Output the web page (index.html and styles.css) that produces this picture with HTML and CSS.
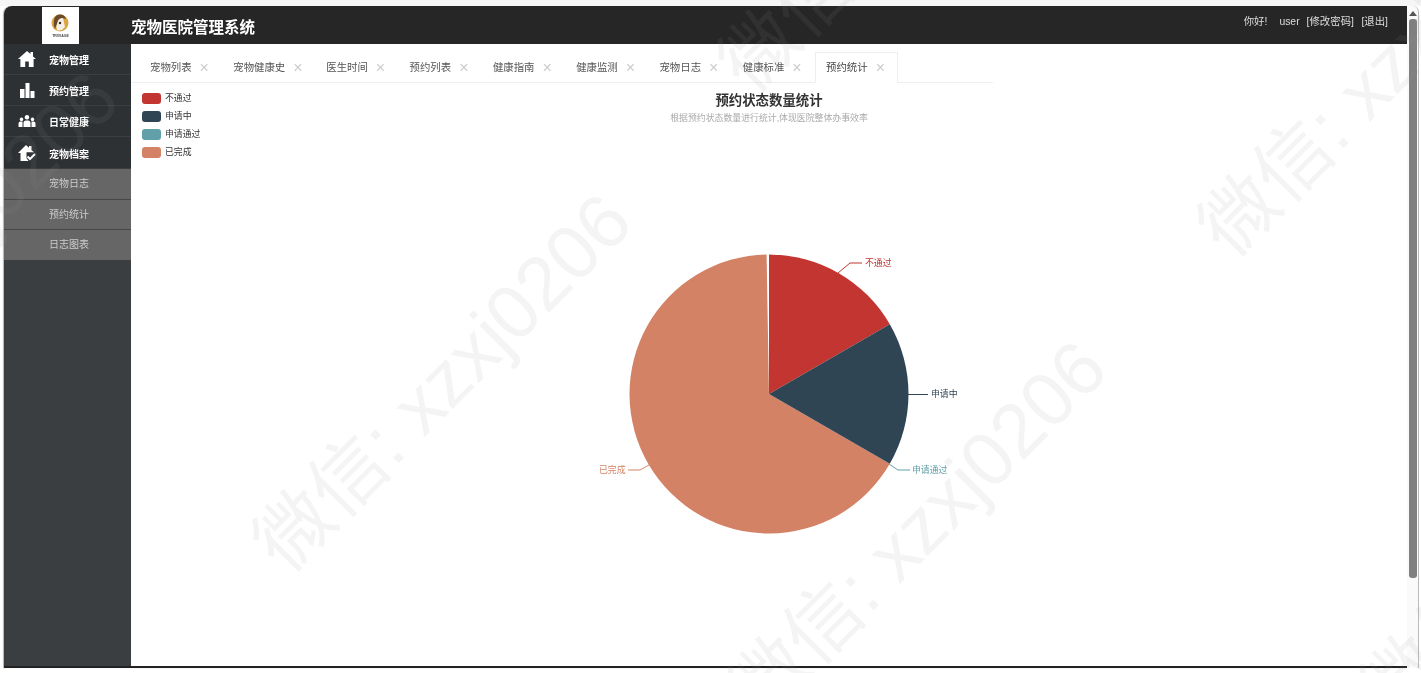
FILE: index.html
```html
<!DOCTYPE html>
<html lang="zh-CN">
<head>
    <meta charset="UTF-8">
    <title>宠物医院管理系统</title>
    <link rel="stylesheet" href="styles.css">
</head>
<body>

    <div class="page">
        <div class="window">
            <!-- Top bar -->
            <header class="topbar">
                <div class="logo">
                    <svg width="37" height="37" viewBox="0 0 37 37">
                        <circle cx="18" cy="16" r="8.500" fill="#d9a441"/>
                        <path d="M13 12 Q17 8 21 11 L23 20 Q19 25 15 23 Z" fill="#f3efe6"/>
                        <path d="M12 13 Q13 7 19 7.500 Q23 8 24 12 L20 11 Q16 11 15 17 L13 22 Q11 18 12 13 Z" fill="#6b4a2a"/>
                        <circle cx="18" cy="16" r="1.200" fill="#3a2a1c"/>
                        <text class="logo-text" x="18.500" y="30" text-anchor="middle">TRIVIAGE</text>
                    </svg>
                </div>
                <h1 class="app-title">宠物医院管理系统</h1>
                <div class="user-info">
                    <span class="hello">你好!</span>
                    <span class="user-name">user</span>
                    <a class="user-link">[修改密码]</a>
                    <a class="user-link">[退出]</a>
                </div>
            </header>

            <div class="main">
                <!-- Side menu -->
                <nav class="sidebar">
                    <div class="menu-item">
                        <svg class="menu-icon" viewBox="0 0 18 16"><path d="M9 0 L12.500 3.100 V1 H15 V5.400 L18 8 H15.600 V16 H10.800 V10.500 H7.200 V16 H2.400 V8 H0 Z"/></svg>
                        <span>宠物管理</span>
                    </div>
                    <div class="menu-item">
                        <svg class="menu-icon" viewBox="0 0 18 16"><path d="M2 7 H6.500 V16 H2 Z M7.500 1 H11.500 V16 H7.500 Z M12.500 9 H16.500 V16 H12.500 Z"/></svg>
                        <span>预约管理</span>
                    </div>
                    <div class="menu-item">
                        <svg class="menu-icon" viewBox="0 0 18 16"><path d="M9 2 a2.300 2.300 0 1 1 -.01 0 Z M5.500 14 V10 Q5.500 7.500 8 7.500 H10 Q12.500 7.500 12.500 10 V14 Z M3.500 4.500 a1.800 1.800 0 1 1 -.01 0 Z M0.500 13 V10.500 Q0.500 8.500 2.500 8.500 H4.500 V14 H0.500 Z M14.500 4.500 a1.800 1.800 0 1 1 -.01 0 Z M13.500 8.500 H15.500 Q17.500 8.500 17.500 10.500 V14 H13.500 Z"/></svg>
                        <span>日常健康</span>
                    </div>
                    <div class="menu-item">
                        <svg class="menu-icon" viewBox="0 0 18 16"><path d="M8 0 L11 2.700 V1 H13.500 V5 L16 7.300 H8.500 V13 L10.500 16 H2.500 V8 H0 Z"/><path d="M9.500 11.500 L12 14 L17 9" fill="none" stroke="#fff" stroke-width="2"/></svg>
                        <span>宠物档案</span>
                    </div>
                    <div class="submenu">
                        <div class="submenu-item">宠物日志</div>
                        <div class="submenu-item">预约统计</div>
                        <div class="submenu-item">日志图表</div>
                    </div>
                </nav>

                <div class="content">
                    <!-- Tabs -->
                    <ul class="tabs">
                        <li class="tab">宠物列表<i class="tab-close">×</i></li>
                        <li class="tab">宠物健康史<i class="tab-close">×</i></li>
                        <li class="tab">医生时间<i class="tab-close">×</i></li>
                        <li class="tab">预约列表<i class="tab-close">×</i></li>
                        <li class="tab">健康指南<i class="tab-close">×</i></li>
                        <li class="tab">健康监测<i class="tab-close">×</i></li>
                        <li class="tab">宠物日志<i class="tab-close">×</i></li>
                        <li class="tab">健康标准<i class="tab-close">×</i></li>
                        <li class="tab active">预约统计<i class="tab-close">×</i></li>
                    </ul>

                    <!-- Pie chart, viewBox uses page coordinates -->
                    <svg class="chart" viewBox="131 83 1276 583">
                        <text class="chart-title" x="769" y="104.500" text-anchor="middle">预约状态数量统计</text>
                        <text class="chart-sub" x="769" y="121" text-anchor="middle">根据预约状态数量进行统计,体现医院整体办事效率</text>

                        <rect x="142" y="93" width="19" height="11" rx="3" fill="#c23531"/>
                        <text class="legend-text" x="165" y="100.500">不通过</text>
                        <rect x="142" y="111" width="19" height="11" rx="3" fill="#2f4554"/>
                        <text class="legend-text" x="165" y="118.500">申请中</text>
                        <rect x="142" y="129" width="19" height="11" rx="3" fill="#61a0a8"/>
                        <text class="legend-text" x="165" y="136.500">申请通过</text>
                        <rect x="142" y="147" width="19" height="11" rx="3" fill="#d48265"/>
                        <text class="legend-text" x="165" y="154.500">已完成</text>

                        <path d="M769 394 L889.800 463.750 A139.500 139.500 0 1 1 766.600 254.500 Z" fill="#d48265"/>
                        <path d="M769 394 V254.500 A139.500 139.500 0 0 1 889.800 324.250 Z" fill="#c23531"/>
                        <path d="M769 394 L889.800 324.250 A139.500 139.500 0 0 1 889.800 463.750 Z" fill="#2f4554"/>

                        <polyline class="label-line" points="838,273 850,263 862,263" stroke="#c23531"/>
                        <text class="pie-label" x="865" y="265.500" fill="#c23531">不通过</text>
                        <polyline class="label-line" points="908,394.500 928,394.500" stroke="#2f4554"/>
                        <text class="pie-label" x="931" y="396.500" fill="#2f4554">申请中</text>
                        <polyline class="label-line" points="889,464 898,470 910,470" stroke="#61a0a8"/>
                        <text class="pie-label" x="912" y="472.500" fill="#61a0a8">申请通过</text>
                        <polyline class="label-line" points="628,470 640,470 649,465" stroke="#d48265"/>
                        <text class="pie-label" x="599" y="472.500" fill="#d48265">已完成</text>
                    </svg>
                </div>
            </div>
        </div>

        <!-- Page scrollbar -->
        <div class="scrollbar">
            <span class="scroll-arrow"></span>
            <span class="scroll-thumb"></span>
        </div>
    </div>

    <!-- Diagonal watermarks over the whole shot -->
    <div class="watermark wm-a">微信: xzxj0206</div>
    <div class="watermark wm-b">微信: xzxj0206</div>
    <div class="watermark wm-c">微信: xzxj0206</div>
    <div class="watermark wm-d">微信: xzxj0206</div>
    <div class="watermark wm-e">微信: xzxj0206</div>
    <div class="watermark wm-f">微信: xzxj0206</div>
    <div class="watermark wm-g">微信: xzxj0206</div>

</body>
</html>
```

FILE: styles.css
```css
/* Reset and basic styles */
html, body {
    margin: 0;
    padding: 0;
    height: 100%;
    overflow: hidden;
    background: #fff;
    font-family: "Liberation Sans", "Noto Sans CJK SC", sans-serif;
}

body {
    box-sizing: border-box;
    border-top: 6px solid #f6f6f6;
}

/* the shot is a slightly soft upscale */
.page {
    display: flex;
    height: 662px;
    margin: 0 2px 0 4px;
    filter: blur(0.4px);
}

.window {
    flex: 1;
    display: flex;
    flex-direction: column;
    min-width: 0;
    border-bottom: 2px solid #222;
    border-top-left-radius: 8px;
    box-shadow: -1px 0 1px rgba(0, 0, 0, 0.3);
    overflow: hidden;
}

/* Top bar */
.topbar {
    display: flex;
    align-items: center;
    height: 38px;
    flex-shrink: 0;
    background: #262626;
    color: #fff;
}

.logo {
    width: 37px;
    height: 37px;
    margin: 1px 0 0 38px;
    background: #fff;
}

.logo svg {
    display: block;
}

.logo-text {
    font-size: 3.500px;
    font-weight: bold;
    fill: #444;
}

.app-title {
    margin: 2px 0 0 52px;
    font-size: 15.5px;
    font-weight: bold;
}

.user-info {
    display: flex;
    align-items: baseline;
    margin: -9px 19px 0 auto;
    font-size: 10.4px;
    color: #ddd;
}

.user-name {
    margin: 0 7px 0 12px;
}

.user-link {
    margin-right: 7.500px;
}

.user-link:last-child {
    margin-right: 0;
}

/* Main area */
.main {
    flex: 1;
    display: flex;
    min-height: 0;
}

.sidebar {
    width: 127px;
    flex-shrink: 0;
    background: #3a3e41;
}

.menu-item {
    display: flex;
    align-items: center;
    height: 30px;
    padding-left: 14px;
    background: #2e3134;
    border-bottom: 1px solid #3a3e41;
    color: #fff;
    font-size: 10px;
    font-weight: bold;
}

.menu-item:nth-child(4) {
    padding-top: 1px;
}

.menu-icon {
    width: 18px;
    height: 16px;
    margin-right: 13px;
    fill: #fff;
}

.submenu-item {
    height: 29.500px;
    line-height: 30.500px;
    padding-left: 45px;
    background: #666;
    border-bottom: 1px solid #474747;
    color: #ccc;
    font-size: 10px;
}

.submenu-item:last-child {
    border-bottom: 0;
}

/* Content */
.content {
    flex: 1;
    min-width: 0;
    display: flex;
    flex-direction: column;
    background: #fff;
}

.tabs {
    display: flex;
    width: 854px;
    height: 30px;
    margin: 8px 0 0;
    padding: 0 0 0 8px;
    list-style: none;
    border-bottom: 1px solid #eee;
    flex-shrink: 0;
}

.tab {
    display: flex;
    align-items: center;
    height: 30px;
    padding: 0 0 2px 11px;
    width: 83.300px;
    box-sizing: border-box;
    font-size: 10.400px;
    color: #555;
    white-space: nowrap;
}

.tab:nth-child(2) {
    width: 93px;
}

.tab.active {
    height: 31px;
    border: 1px solid #eee;
    border-bottom: 1px solid #fff;
    background: #fff;
    color: #444;
    padding-left: 10px;
}

.tab-close {
    margin: 3px 0 0 8px;
    font-size: 16px;
    font-style: normal;
    color: #ccc;
}

.chart {
    display: block;
    flex: 1;
    width: 100%;
    min-height: 0;
}

.chart-title {
    font-size: 13.400px;
    font-weight: bold;
    fill: #333;
}

.chart-sub {
    font-size: 8.900px;
    fill: #aaa;
}

.legend-text {
    font-size: 8.900px;
    fill: #333;
}

.pie-label {
    font-size: 8.900px;
}

.label-line {
    fill: none;
    stroke-width: 1;
}

/* Scrollbar */
.scrollbar {
    position: relative;
    width: 11px;
    flex-shrink: 0;
    background: #fafafa;
    border-right: 1px solid #bbb;
    border-top-right-radius: 6px;
}

.scroll-arrow {
    display: block;
    width: 0;
    margin: 5px auto 0;
    border: 4px solid transparent;
    border-top: 0;
    border-bottom: 5px solid #555;
}

.scroll-thumb {
    display: block;
    width: 8px;
    height: 559px;
    margin: 3px auto 0;
    background: #808080;
    border-radius: 3px;
}

/* Watermarks */
.watermark {
    position: absolute;
    font-size: 76px;
    line-height: 1;
    white-space: nowrap;
    color: rgba(150, 150, 150, 0.1);
    transform-origin: 0 50%;
    transform: rotate(-45deg);
    pointer-events: none;
}

.wm-a { left: 268px; top: 519px; }
.wm-b { left: 743px; top: 666px; }
.wm-c { left: 733px; top: 39px; }
.wm-d { left: 1213px; top: 204px; }
.wm-e { left: -245px; top: 397px; }
.wm-f { left: -235px; top: 1022px; }
.wm-g { left: 1375px; top: 665px; }
```
